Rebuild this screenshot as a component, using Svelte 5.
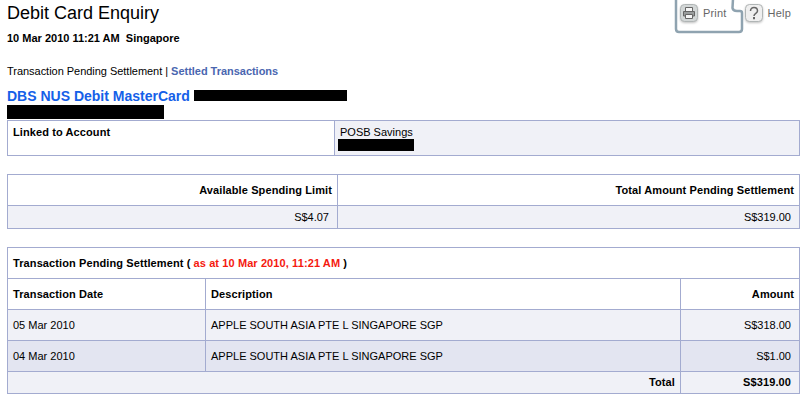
<script>
  const rows = [
    { date: '05 Mar 2010', amount: 'S$318.00', cls: 'odd' },
    { date: '04 Mar 2010', amount: 'S$1.00', cls: 'even' }
  ];
  const desc = 'APPLE SOUTH ASIA PTE L SINGAPORE SGP';
</script>

<div class="page">
  <header class="top">
    <div class="heading">
      <h1>Debit Card Enquiry</h1>
      <p class="stamp">10 Mar 2010 11:21 AM&nbsp; Singapore</p>
    </div>
    <div class="tools">
      <a class="tool print" href="#print">
        <svg class="ico" width="18" height="18" viewBox="0 0 18 18">
          <rect x="0.500" y="0.500" width="17" height="17" rx="4" fill="#d3d7d7" stroke="#b0b5b5"/>
          <path d="M5.500 3.500h7v4h-7z" fill="#f6f6f6" stroke="#666"/>
          <path d="M3.500 7.500h11v4.500h-11z" fill="#9a9d9d" stroke="#666"/>
          <path d="M5.500 10.500h7v4h-7z" fill="#f6f6f6" stroke="#666"/>
        </svg>
        <span>Print</span>
      </a>
      <a class="tool help" href="#help">
        <svg class="ico" width="18" height="18" viewBox="0 0 18 18">
          <rect x="0.500" y="0.500" width="17" height="17" rx="4" fill="#efefef" stroke="#b0b5b5"/>
          <path d="M5.500 7c0-4.800 7-4.800 7 0 0 2.500-3.500 2.300-3.500 5" fill="none" stroke="#666" stroke-width="1.500"/>
          <path d="M8 13h2v2.200H8z" fill="#666"/>
        </svg>
        <span>Help</span>
      </a>
      <svg class="ring" width="72" height="36" viewBox="0 0 72 36">
        <path d="M3 0V30q0 3 3 3h60q3 0 3-3V14q0-2-2-2h-3q-4 0-4.500-3L60 0" fill="none" stroke="#8fa3b0" stroke-width="2.500"/>
      </svg>
    </div>
  </header>

  <nav class="links">Transaction Pending Settlement | <a href="#settled">Settled Transactions</a></nav>

  <div class="card-title">
    <strong>DBS NUS Debit MasterCard</strong> <span class="redact r1"></span>
    <span class="redact r2"></span>
  </div>

  <table class="linked">
    <colgroup><col class="c-linked" /><col /></colgroup>
    <tbody>
      <tr>
        <th class="left">Linked to Account</th>
        <td class="account">POSB Savings<span class="redact r3"></span></td>
      </tr>
    </tbody>
  </table>

  <table class="limit">
    <colgroup><col class="c-limit" /><col /></colgroup>
    <tbody>
      <tr class="head">
        <th class="right">Available Spending Limit</th>
        <th class="right">Total Amount Pending Settlement</th>
      </tr>
      <tr class="odd">
        <td class="right pad">S$4.07</td>
        <td class="right pad">S$319.00</td>
      </tr>
    </tbody>
  </table>

  <table class="tx">
    <colgroup><col class="c-date" /><col /><col class="c-amount" /></colgroup>
    <tbody>
      <tr class="head">
        <th class="left" colspan="3">Transaction Pending Settlement ( <span class="red">as at 10 Mar 2010, 11:21 AM</span> )</th>
      </tr>
      <tr class="head">
        <th class="left">Transaction Date</th>
        <th class="left">Description</th>
        <th class="right">Amount</th>
      </tr>
      {#each rows as row}
        <tr class={row.cls}>
          <td>{row.date}</td>
          <td>{desc}</td>
          <td class="right pad">{row.amount}</td>
        </tr>
      {/each}
      <tr class="odd total">
        <th class="right" colspan="2">Total</th>
        <th class="right pad">S$319.00</th>
      </tr>
    </tbody>
  </table>
</div>

<style>
  :global(body) {
    margin: 0;
    background: #fff;
    overflow: hidden;
  }
  .page {
    width: 793px;
    padding: 0 11px 0 7px;
    font-family: "Liberation Sans", Arial, sans-serif;
    font-size: 11px;
    color: #000;
  }
  .top {
    display: flex;
    justify-content: space-between;
    height: 64px;
  }
  h1 {
    margin: 3px 0 0;
    font-size: 18px;
    font-weight: 400;
    line-height: 21px;
  }
  .stamp {
    margin: 8px 0 0;
    font-weight: 700;
    font-size: 11px;
    line-height: 13px;
  }
  .tools {
    position: relative;
    display: flex;
    align-items: flex-start;
    gap: 18px;
    padding: 4px 0 0;
    margin-right: 9px;
    height: 30px;
  }
  .tool {
    display: flex;
    align-items: center;
    gap: 5px;
    color: #666;
    text-decoration: none;
    font-size: 11px;
    letter-spacing: 0.2px;
    line-height: 18px;
  }
  .ico {
    filter: drop-shadow(0 1px 1px rgba(0, 0, 0, 0.25));
  }
  .ring {
    position: absolute;
    left: -7px;
    top: -1px;
    filter: blur(0.4px);
  }
  .links {
    line-height: 14px;
    letter-spacing: -0.03px;
  }
  .links a {
    color: #4a66b0;
    font-weight: 700;
    text-decoration: none;
  }
  .card-title {
    margin-top: 11px;
    font-size: 14px;
    line-height: 15px;
    color: #1560e8;
  }
  .redact {
    display: inline-block;
    background: #000;
    vertical-align: top;
  }
  .r1 {
    width: 153px;
    height: 11px;
    margin-top: 1px;
  }
  .r2 {
    display: block;
    width: 157px;
    height: 14px;
    margin-top: 1px;
  }
  .r3 {
    display: block;
    width: 76px;
    height: 12px;
    margin-left: -2px;
  }
  table {
    width: 793px;
    border-collapse: collapse;
    table-layout: fixed;
    font-size: 11px;
  }
  .c-linked { width: 327px; }
  .c-limit { width: 330px; }
  .c-date { width: 198px; }
  .c-amount { width: 119px; }
  th, td {
    border: 1px solid #a3abd0;
    padding: 0 5px;
    text-align: left;
    line-height: 13px;
    box-sizing: border-box;
  }
  th {
    font-weight: 700;
    letter-spacing: 0.1px;
  }
  .right {
    text-align: right;
  }
  .pad {
    padding-right: 8px;
  }
  .linked {
    margin-top: 1px;
  }
  .linked th, .linked td {
    height: 35px;
    vertical-align: top;
    padding-top: 5px;
  }
  .account {
    background: #f0f1f7;
  }
  .limit {
    margin-top: 18px;
  }
  .limit .head > * {
    height: 31px;
  }
  .limit .odd > * {
    height: 23px;
  }
  .tx {
    margin-top: 18px;
  }
  .tx tr > * {
    height: 31px;
  }
  .tx .total > * {
    height: 22px;
  }
  .odd {
    background: #f0f1f7;
  }
  .even {
    background: #e3e5f1;
  }
  .red {
    color: #f5190f;
  }
</style>
